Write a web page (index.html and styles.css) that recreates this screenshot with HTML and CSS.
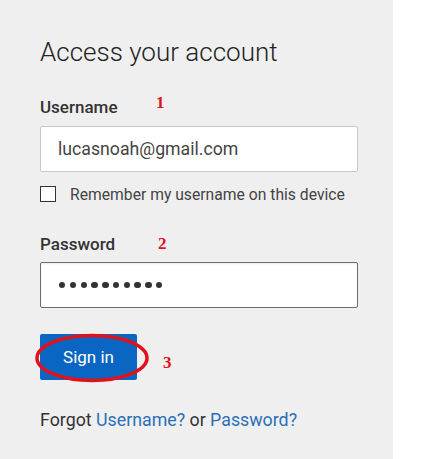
FILE: index.html
```html
<!DOCTYPE html>
<html>
<head>
<meta charset="utf-8">
<link rel="stylesheet" href="styles.css">
</head>
<body>
<div class="panel">
  <h1 class="title">Access your account</h1>
  <div class="label-row"><span class="label">Username</span><span class="mark mark1">1</span></div>
  <div class="field">lucasnoah@gmail.com</div>
  <div class="check-row"><span class="checkbox"></span><span class="check-text">Remember my username on this device</span></div>
  <div class="label-row pw-label"><span class="label">Password</span><span class="mark mark2">2</span></div>
  <div class="field field-focus">
    <span class="dots"><i></i><i></i><i></i><i></i><i></i><i></i><i></i><i></i><i></i><i></i></span>
  </div>
  <div class="btn-row">
    <div class="btn-wrap">
      <button class="btn">Sign in</button>
      <svg class="ring" width="118" height="52" viewBox="0 0 118 52"><ellipse cx="59" cy="26" rx="55" ry="22.5" fill="none" stroke="#e0121c" stroke-width="3.5"/></svg>
    </div>
    <span class="mark mark3">3</span>
  </div>
  <p class="forgot">Forgot <a href="#">Username?</a> or <a href="#">Password?</a></p>
</div>
</body>
</html>
```
FILE: styles.css
```css
html, body { margin: 0; padding: 0; background: #fff; }
body { width: 423px; height: 459px; overflow: hidden; font-family: Roboto, "Liberation Sans", sans-serif; }
.panel { width: 393px; height: 459px; background: #efefef; box-sizing: border-box; padding: 34px 0 0 40px; }
.title { margin: 0; font-size: 26px; font-weight: 300; color: #222; line-height: 36px; }
.label-row { display: flex; align-items: flex-end; margin-top: 27px; height: 20px; }
.label { font-size: 17px; font-weight: 500; color: #333; line-height: 20px; width: 118px; }
.mark { font-family: "Liberation Serif", serif; font-weight: bold; color: #e0121c; font-size: 17px; line-height: 17px; }
.mark1 { margin-bottom: 6px; margin-left: -2px; }
.mark2 { margin-bottom: 2px; }
.field { margin-top: 9px; width: 318px; height: 46px; box-sizing: border-box; background: #fff; border: 1px solid #c9c9c9; border-radius: 2px; padding: 0 0 0 17px; display: flex; align-items: center; font-size: 17.7px; color: #444; }
.field-focus { border-color: #6c6c6c; margin-top: 8px; padding-left: 18px; box-shadow: inset 0 1px 2px rgba(0,0,0,0.08); }
.dots { display: flex; gap: 4.4px; }
.dots i { display: block; width: 6.4px; height: 6.4px; border-radius: 50%; background: #333; }
.check-row { display: flex; align-items: center; margin-top: 14px; height: 16px; }
.checkbox { width: 16px; height: 16px; box-sizing: border-box; border: 1px solid #333; background: #fff; }
.check-text { margin-left: 14px; font-size: 15.7px; color: #444; }
.pw-label { margin-top: 32px; }
.btn-row { display: flex; align-items: center; margin-top: 26px; }
.btn-wrap { position: relative; width: 97px; height: 46px; }
.btn { width: 97px; height: 46px; border: none; border-radius: 2px; background: #0b66c3; color: #fff; font-family: Roboto, "Liberation Sans", sans-serif; font-size: 17px; padding: 0; }
.ring { position: absolute; left: -7px; top: -2px; }
.mark3 { margin-left: 26px; margin-top: 10px; }
.forgot { margin: 29px 0 0; font-size: 17.8px; color: #333; }
.forgot a { color: #2a6fb8; text-decoration: none; }
```
